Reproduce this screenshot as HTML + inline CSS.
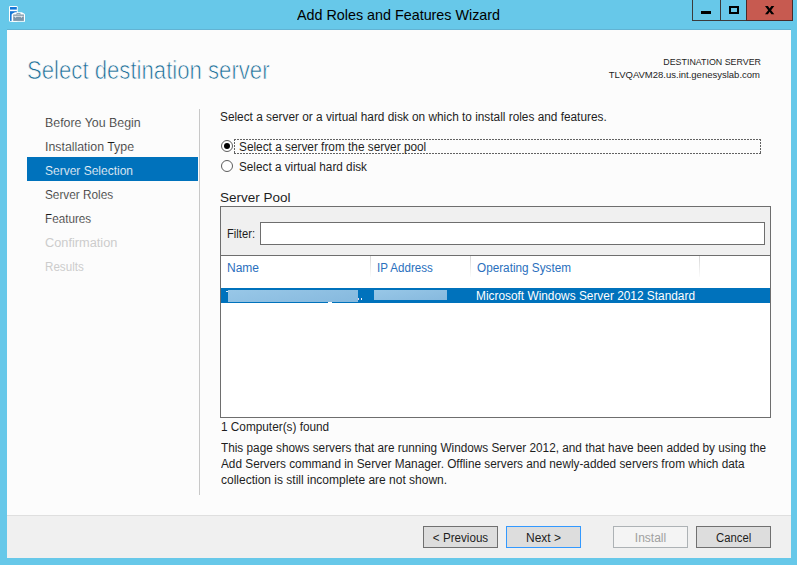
<!DOCTYPE html>
<html><head><meta charset="utf-8">
<style>
*{margin:0;padding:0;box-sizing:border-box}
html,body{width:797px;height:565px;overflow:hidden;background:#67c8e9}
body{position:relative;font-family:"Liberation Sans",sans-serif;color:#1e1e1e}
.a{position:absolute}
.t{position:absolute;white-space:nowrap;line-height:1;font-size:12px}
#content{position:absolute;left:7px;top:29px;width:784px;height:529px;background:#fcfcfc;border-top:1px solid #62b3d3}
#footer{position:absolute;left:7px;top:515px;width:784px;height:43px;background:#f0f0f0;border-top:1px solid #dfdfdf}
.btn{position:absolute;top:526px;height:22px;width:75px;border:1px solid #707070;background:#dddddd;font-size:12px;line-height:22px;text-align:center;color:#1e1e1e}
</style></head><body>
<!-- title bar icon -->
<svg class="a" style="left:0;top:0" width="40" height="29" viewBox="0 0 40 29">
  <rect x="9" y="6" width="8.7" height="15.7" rx="1.3" fill="#fff"/>
  <rect x="10" y="7" width="6.8" height="2.6" fill="#1476d6"/>
  <rect x="10" y="11.2" width="6.8" height="9.7" fill="#1476d6"/>
  <path d="M11.6,15 Q11.6,14 12.6,13.6 L15,12.2 H21.8 L24,13.6 Q25,14 25,15 V21.7 H11.6 Z" fill="#fff"/>
  <rect x="13.2" y="14.5" width="10.7" height="6.4" fill="#7b95a9"/>
  <path d="M16.8,14.6 V13.6 H20.2 V14.6" fill="none" stroke="#7b95a9" stroke-width="0.9"/>
  <rect x="13.6" y="15.8" width="9.9" height="0.8" fill="#fff"/>
  <polygon points="15,16.4 16.4,16.4 15.9,17.8 15.5,17.8" fill="#fff"/>
  <polygon points="20.6,16.4 22,16.4 21.6,17.8 21.1,17.8" fill="#fff"/>
</svg>
<div class="t" style="left:297px;top:8px;font-size:14.5px;color:#000;transform-origin:0 0;transform:scaleX(0.988)">Add Roles and Features Wizard</div>
<!-- caption buttons -->
<div class="a" style="left:692px;top:-1px;width:29px;height:22px;border:1px solid #3b3b3b;border-right:none"></div>
<div class="a" style="left:720px;top:-1px;width:27px;height:22px;border:1px solid #3b3b3b;border-right:none"></div>
<div class="a" style="left:746px;top:-1px;width:47px;height:22px;border:1px solid #4a2a28;background:#c75a50"></div>
<div class="a" style="left:701px;top:11px;width:10px;height:3px;background:#000"></div>
<div class="a" style="left:729px;top:6px;width:10px;height:8px;border:2px solid #000"></div>
<svg class="a" style="left:760px;top:0px" width="20" height="20" viewBox="760 0 20 20"><path d="M765,6 h2.9 l1.75,2.55 l1.75,-2.55 h2.9 l-3.2,4.15 l3.2,4.15 h-2.9 l-1.75,-2.55 l-1.75,2.55 h-2.9 l3.2,-4.15 z" fill="#000"/></svg>

<div id="content"></div>
<div id="footer"></div>

<div class="t" style="left:27px;top:57px;font-size:26px;color:#1a6c96;-webkit-text-stroke:0.7px #fcfcfc;transform-origin:0 0;transform:scaleX(0.852)">Select destination server</div>
<div class="t" style="left:600px;width:161px;text-align:right;top:57px;font-size:9.5px;color:#1e1e1e;transform-origin:100% 0;transform:scaleX(0.933)">DESTINATION SERVER</div>
<div class="t" style="left:560px;width:200px;text-align:right;top:70px;font-size:9.5px;color:#1e1e1e">TLVQAVM28.us.int.genesyslab.com</div>

<!-- nav -->
<div class="a" style="left:199px;top:109px;width:1px;height:386px;background:#c8c8c8"></div>
<div class="a" style="left:27px;top:157px;width:171px;height:24px;background:#0072bc"></div>
<div class="t" style="left:45px;top:117px;transform-origin:0 0;transform:scaleX(1.032);color:#1a1a1a;-webkit-text-stroke:0.2px #fcfcfc">Before You Begin</div>
<div class="t" style="left:45px;top:141px;transform-origin:0 0;transform:scaleX(1.029);color:#1a1a1a;-webkit-text-stroke:0.2px #fcfcfc">Installation Type</div>
<div class="t" style="left:45px;top:165px;color:#fff;-webkit-text-stroke:0.2px #0072bc">Server Selection</div>
<div class="t" style="left:45px;top:189px;transform-origin:0 0;transform:scaleX(0.983);color:#1a1a1a;-webkit-text-stroke:0.2px #fcfcfc">Server Roles</div>
<div class="t" style="left:45px;top:213px;transform-origin:0 0;transform:scaleX(0.974);color:#1a1a1a;-webkit-text-stroke:0.2px #fcfcfc">Features</div>
<div class="t" style="left:45px;top:237px;color:#cccccc;transform-origin:0 0;transform:scaleX(1.064)">Confirmation</div>
<div class="t" style="left:45px;top:261px;color:#cccccc;transform-origin:0 0;transform:scaleX(0.969)">Results</div>

<!-- main -->
<div class="t" style="left:220px;top:111px;transform-origin:0 0;transform:scaleX(0.986)">Select a server or a virtual hard disk on which to install roles and features.</div>
<svg class="a" style="left:215px;top:135px" width="560" height="45" viewBox="215 135 560 45">
  <circle cx="227" cy="146" r="5.5" fill="#fff" stroke="#5c5c5c" stroke-width="1"/>
  <circle cx="227" cy="146" r="3" fill="#000"/>
  <circle cx="227" cy="166" r="5.5" fill="#fff" stroke="#5c5c5c" stroke-width="1"/>
</svg>
<div class="a" style="left:234px;top:139px;width:527px;height:1px;background:repeating-linear-gradient(to right,#626262 0 2px,transparent 2px 3px)"></div>
<div class="a" style="left:234px;top:153px;width:527px;height:1px;background:repeating-linear-gradient(to right,#626262 0 2px,transparent 2px 3px)"></div>
<div class="a" style="left:234px;top:139px;width:1px;height:15px;background:repeating-linear-gradient(to bottom,#626262 0 2px,transparent 2px 3px)"></div>
<div class="a" style="left:760px;top:139px;width:1px;height:15px;background:repeating-linear-gradient(to bottom,#626262 0 2px,transparent 2px 3px)"></div>
<div class="t" style="left:239px;top:141px;transform-origin:0 0;transform:scaleX(0.985)">Select a server from the server pool</div>
<div class="t" style="left:239px;top:161px;transform-origin:0 0;transform:scaleX(0.979)">Select a virtual hard disk</div>

<div class="t" style="left:220px;top:191px;font-size:13.5px">Server Pool</div>
<div class="a" style="left:220px;top:206px;width:551px;height:212px;border:1px solid #6e6e6e;background:#fff"></div>
<div class="a" style="left:221px;top:207px;width:549px;height:49px;background:#f0f0f0;border-bottom:1px solid #6e6e6e"></div>
<div class="t" style="left:227px;top:228px;transform-origin:0 0;transform:scaleX(0.933)">Filter:</div>
<div class="a" style="left:260px;top:222px;width:505px;height:23px;border:1px solid #6e6e6e;background:#fff"></div>
<div class="t" style="left:227px;top:262px;color:#2a6fbd">Name</div>
<div class="t" style="left:377px;top:262px;color:#2a6fbd;transform-origin:0 0;transform:scaleX(0.965)">IP Address</div>
<div class="t" style="left:477px;top:262px;color:#2a6fbd;transform-origin:0 0;transform:scaleX(0.979)">Operating System</div>
<div class="a" style="left:370px;top:256px;width:1px;height:21px;background:linear-gradient(#d6d6d6,#fcfcfc)"></div>
<div class="a" style="left:470px;top:256px;width:1px;height:21px;background:linear-gradient(#d6d6d6,#fcfcfc)"></div>
<div class="a" style="left:699px;top:256px;width:1px;height:21px;background:linear-gradient(#d6d6d6,#fcfcfc)"></div>
<div class="a" style="left:221px;top:288px;width:549px;height:15px;background:#0072bc"></div>
<div class="a" style="left:226px;top:291px;width:3px;height:1px;background:#e0eef8"></div>
<div class="a" style="left:228px;top:290px;width:130px;height:12px;background:linear-gradient(170deg,#98c7e7,#86b9de)"></div>
<div class="a" style="left:328px;top:302px;width:4px;height:1px;background:#fff"></div>
<div class="a" style="left:358px;top:298px;width:1px;height:2px;background:#e6d8e8"></div>
<div class="a" style="left:361px;top:298px;width:1px;height:2px;background:#f4f4ff"></div>
<div class="a" style="left:374px;top:290px;width:73px;height:10px;background:linear-gradient(170deg,#98c7e7,#86b9de)"></div>
<div class="t" style="left:476px;top:290px;color:#fff;transform-origin:0 0;transform:scaleX(0.989)">Microsoft Windows Server 2012 Standard</div>

<div class="t" style="left:221px;top:421px;transform-origin:0 0;transform:scaleX(0.983)">1 Computer(s) found</div>
<div class="t" style="left:221px;top:442px;transform-origin:0 0;transform:scaleX(0.982)">This page shows servers that are running Windows Server 2012, and that have been added by using the</div>
<div class="t" style="left:221px;top:458px;transform-origin:0 0;transform:scaleX(0.983)">Add Servers command in Server Manager. Offline servers and newly-added servers from which data</div>
<div class="t" style="left:221px;top:474px">collection is still incomplete are not shown.</div>

<div class="btn" style="left:423px"><span style="display:inline-block;transform:scaleX(0.97)">&lt; Previous</span></div>
<div class="btn" style="left:506px;border-color:#3399ff">Next &gt;</div>
<div class="btn" style="left:613px;border-color:#adb2b5;background:#f4f4f4;color:#a0a0a0">Install</div>
<div class="btn" style="left:696px"><span style="display:inline-block;transform:scaleX(0.941)">Cancel</span></div>
</body></html>
